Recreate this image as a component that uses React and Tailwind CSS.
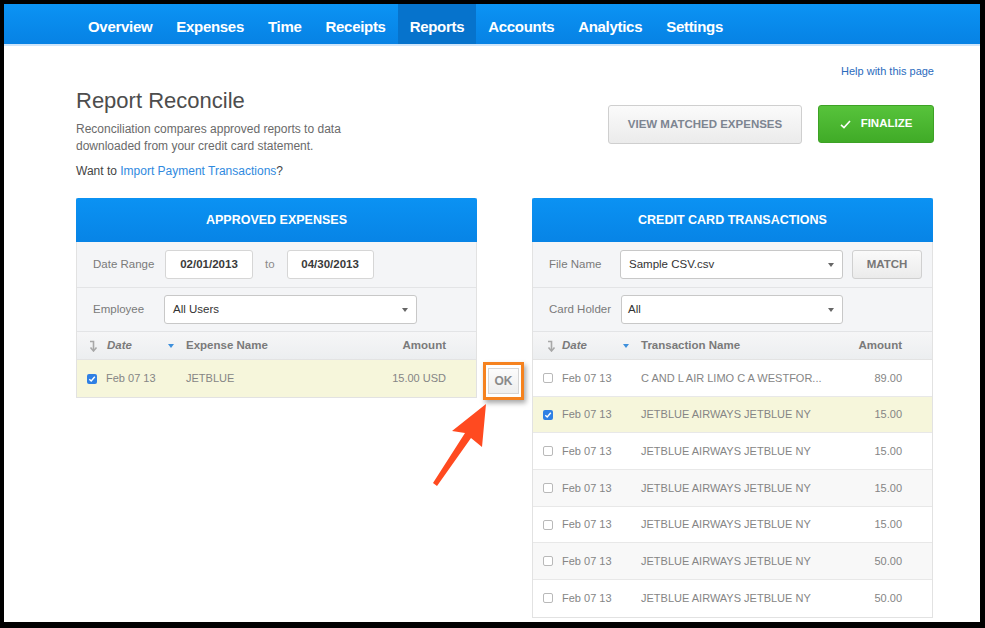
import React from "react";

const SortIcon = () => (
  <svg width="10" height="12" viewBox="0 0 10 12" className="shrink-0">
    <path d="M2 1.5 H5.5 V10" stroke="#a8a8a8" strokeWidth="1.6" fill="none" />
    <path d="M2.5 7.5 L5.5 11 L8.5 7.5" stroke="#a8a8a8" strokeWidth="1.6" fill="none" />
  </svg>
);

const BlueCaret = () => (
  <svg width="6" height="4" viewBox="0 0 6 4" className="shrink-0">
    <path d="M0 0 H6 L3 4 Z" fill="#3d8fdc" />
  </svg>
);

const SelCaret = () => (
  <svg width="6" height="4" viewBox="0 0 6 4" className="shrink-0">
    <path d="M0 0 H6 L3 4 Z" fill="#666" />
  </svg>
);

const Check = ({ on }) =>
  on ? (
    <div className="w-[10px] h-[10px] rounded-[2px] bg-[#2f80e4] flex items-center justify-center shrink-0">
      <svg width="8" height="8" viewBox="0 0 8 8">
        <path d="M1.3 4.2 L3.2 6 L6.8 1.8" stroke="#fff" strokeWidth="1.4" fill="none" />
      </svg>
    </div>
  ) : (
    <div className="w-[10px] h-[10px] rounded-[2px] border border-[#b9b9b9] bg-white shrink-0" />
  );

const navItems = ["Overview", "Expenses", "Time", "Receipts", "Reports", "Accounts", "Analytics", "Settings"];

const rows = [
  { name: "C AND L AIR LIMO C A WESTFOR...", amt: "89.00", bg: "bg-white" },
  { name: "JETBLUE AIRWAYS JETBLUE NY", amt: "15.00", bg: "bg-[#f6f6db]", on: true },
  { name: "JETBLUE AIRWAYS JETBLUE NY", amt: "15.00", bg: "bg-white" },
  { name: "JETBLUE AIRWAYS JETBLUE NY", amt: "15.00", bg: "bg-[#f8f8f8]" },
  { name: "JETBLUE AIRWAYS JETBLUE NY", amt: "15.00", bg: "bg-white" },
  { name: "JETBLUE AIRWAYS JETBLUE NY", amt: "50.00", bg: "bg-[#f8f8f8]" },
  { name: "JETBLUE AIRWAYS JETBLUE NY", amt: "50.00", bg: "bg-white" },
];

export default function App() {
  return (
    <div className="relative w-[985px] h-[628px] bg-black pl-[4px] pt-[4px] pr-[5px] pb-[6px] font-['Liberation_Sans',Arial,sans-serif]">
      <div className="w-full h-full bg-white overflow-hidden">
        {/* Nav */}
        <div className="h-[40px] bg-gradient-to-b from-[#0b93f4] to-[#0782e4] flex pl-[72px]">
          {navItems.map((n) => (
            <div
              key={n}
              className={`h-full flex items-center pt-[6px] px-3 text-white font-bold text-[15px] tracking-[-0.3px] ${
                n === "Reports" ? "bg-[#0673cc]" : ""
              }`}
            >
              {n}
            </div>
          ))}
        </div>
        <div className="h-[2px] bg-[#cfe5fa]" />

        <div className="ml-[72px] w-[858px]">
          <div className="flex justify-end pt-[18px]">
            <span className="text-[11px] leading-[14px] text-[#2a6bbd]">Help with this page</span>
          </div>

          <div className="flex justify-between items-start">
            <div>
              <div className="mt-[10px] text-[22px] leading-[26px] text-[#4d4d4d]">Report Reconcile</div>
              <div className="mt-[7px] text-[12px] leading-[17px] text-[#6a6a6a]">
                Reconciliation compares approved reports to data
                <br />
                downloaded from your credit card statement.
              </div>
              <div className="mt-[8px] text-[12px] leading-[17px] text-[#444]">
                Want to <span className="text-[#2f8ae0]">Import Payment Transactions</span>?
              </div>
            </div>
            <div className="flex gap-[16px] mt-[27px]">
              <div className="w-[194px] h-[39px] rounded-[3px] border border-[#cfcfcf] bg-gradient-to-b from-[#fbfbfb] to-[#ebebeb] flex items-center justify-center text-[11.5px] font-bold text-[#7d8591]">
                VIEW MATCHED EXPENSES
              </div>
              <div className="w-[116px] h-[38px] rounded-[3px] border border-[#3da225] bg-gradient-to-b from-[#57c33b] to-[#40ab27] flex items-center justify-center gap-[10px] text-[11.5px] font-bold text-white">
                <svg width="11" height="9" viewBox="0 0 11 9">
                  <path d="M1 4.8 L4 7.6 L10 1" stroke="#fff" strokeWidth="1.6" fill="none" />
                </svg>
                FINALIZE
              </div>
            </div>
          </div>

          {/* Panels */}
          <div className="flex gap-[55px] mt-[18px] items-start">
            {/* Left panel */}
            <div className="w-[401px] border-x border-b border-[#e2e2e2]">
              <div className="h-[44px] -mx-px bg-gradient-to-b from-[#0b92f3] to-[#0784e6] rounded-t-[2px] flex items-center justify-center text-white font-bold text-[12.5px]">
                APPROVED EXPENSES
              </div>
              <div className="bg-[#f4f5f7]">
                <div className="h-[46px] flex items-center pl-[16px] border-b border-[#e3e4e6]">
                  <div className="w-[72px] text-[11.5px] text-[#7a7a7a]">Date Range</div>
                  <div className="w-[88px] h-[29px] bg-white border border-[#d6d6d6] rounded-[3px] flex items-center justify-center text-[11.5px] font-bold text-[#3a3a3a]">
                    02/01/2013
                  </div>
                  <div className="mx-[12px] text-[11.5px] text-[#8a8a8a]">to</div>
                  <div className="w-[87px] h-[29px] bg-white border border-[#d6d6d6] rounded-[3px] flex items-center justify-center text-[11.5px] font-bold text-[#3a3a3a]">
                    04/30/2013
                  </div>
                </div>
                <div className="h-[44px] flex items-center pl-[16px] border-b border-[#e3e4e6]">
                  <div className="w-[71px] text-[11.5px] text-[#7a7a7a]">Employee</div>
                  <div className="w-[253px] h-[29px] bg-white border border-[#c8c8c8] rounded-[3px] flex items-center justify-between pl-[8px] pr-[8px] text-[11.5px] text-[#333]">
                    <span>All Users</span>
                    <SelCaret />
                  </div>
                </div>
              </div>
              <div className="h-[28px] bg-gradient-to-b from-[#f6f6f7] to-[#eceef0] flex items-center pl-[11px] pr-[30px] border-b border-[#e3e3e3] text-[11.5px] font-bold text-[#7a7a7a]">
                <SortIcon />
                <span className="ml-[9px] w-[61px] italic">Date</span>
                <BlueCaret />
                <span className="ml-[12px] flex-1">Expense Name</span>
                <span>Amount</span>
              </div>
              <div className="h-[37px] bg-[#f6f6db] flex items-center pl-[10px] pr-[30px] text-[11px] text-[#858585]">
                <Check on />
                <span className="ml-[9px] w-[80px]">Feb 07 13</span>
                <span className="flex-1">JETBLUE</span>
                <span>15.00 USD</span>
              </div>
            </div>

            {/* Right panel */}
            <div className="w-[401px] border-x border-b border-[#e2e2e2]">
              <div className="h-[44px] -mx-px bg-gradient-to-b from-[#0b92f3] to-[#0784e6] rounded-t-[2px] flex items-center justify-center text-white font-bold text-[12.5px]">
                CREDIT CARD TRANSACTIONS
              </div>
              <div className="bg-[#f4f5f7]">
                <div className="h-[46px] flex items-center pl-[16px] border-b border-[#e3e4e6]">
                  <div className="w-[71px] text-[11.5px] text-[#7a7a7a]">File Name</div>
                  <div className="w-[223px] h-[29px] bg-white border border-[#c8c8c8] rounded-[3px] flex items-center justify-between pl-[8px] pr-[8px] text-[11.5px] text-[#333]">
                    <span>Sample CSV.csv</span>
                    <SelCaret />
                  </div>
                  <div className="ml-[9px] w-[70px] h-[29px] rounded-[3px] border border-[#d0d0d0] bg-gradient-to-b from-[#fafafa] to-[#ebebeb] flex items-center justify-center text-[11.5px] font-bold text-[#777]">
                    MATCH
                  </div>
                </div>
                <div className="h-[44px] flex items-center pl-[16px] border-b border-[#e3e4e6]">
                  <div className="w-[72px] text-[11.5px] text-[#7a7a7a]">Card Holder</div>
                  <div className="w-[222px] h-[29px] bg-white border border-[#c8c8c8] rounded-[3px] flex items-center justify-between pl-[6px] pr-[8px] text-[11.5px] text-[#333]">
                    <span>All</span>
                    <SelCaret />
                  </div>
                </div>
              </div>
              <div className="h-[28px] bg-gradient-to-b from-[#f6f6f7] to-[#eceef0] flex items-center pl-[13px] pr-[30px] border-b border-[#e3e3e3] text-[11.5px] font-bold text-[#7a7a7a]">
                <SortIcon />
                <span className="ml-[6px] w-[61px] italic">Date</span>
                <BlueCaret />
                <span className="ml-[12px] flex-1">Transaction Name</span>
                <span>Amount</span>
              </div>
              {rows.map((r, i) => (
                <div
                  key={i}
                  className={`h-[36.7px] ${r.bg} flex items-center pl-[10px] pr-[30px] text-[11px] text-[#858585] ${
                    i < rows.length - 1 ? "border-b border-[#e8e8e8]" : ""
                  }`}
                >
                  <Check on={r.on} />
                  <span className="ml-[9px] w-[79px]">Feb 07 13</span>
                  <span className="flex-1">{r.name}</span>
                  <span>{r.amt}</span>
                </div>
              ))}
            </div>
          </div>
        </div>
      </div>

      {/* OK annotation */}
      <div className="absolute left-[483px] top-[362px] w-[41px] h-[38px] border-[3px] border-[#f5821f] shadow-[2px_3px_5px_rgba(0,0,0,0.35)] bg-white flex items-center justify-center">
        <div className="w-[31px] h-[26px] border border-[#d5d5d5] bg-gradient-to-b from-[#fcfcfc] to-[#eeeeee] flex items-center justify-center text-[12px] font-bold text-[#8a8a8a]">
          OK
        </div>
      </div>

      {/* Arrow */}
      <svg className="absolute left-[425px] top-[395px]" width="70" height="100" viewBox="0 0 70 100">
        <polygon points="61,9 27,36 40,38 8,88 12,91 46,43 57,52" fill="#ff4a20" />
      </svg>
    </div>
  );
}
